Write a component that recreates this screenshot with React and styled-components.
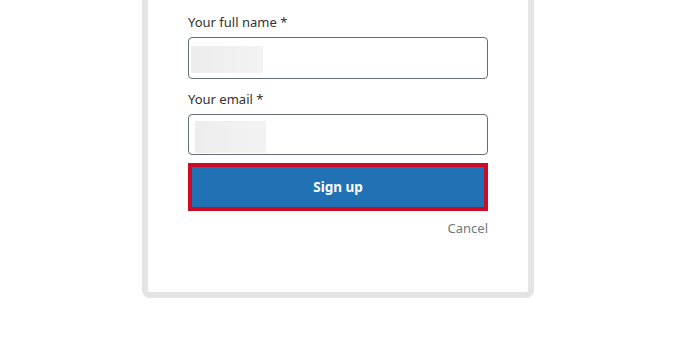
import React from "react";
import styled, { createGlobalStyle } from "styled-components";

const Global = createGlobalStyle`
  html, body { margin: 0; padding: 0; background: #ffffff; }
  body { font-family: "Noto Sans", "Open Sans", sans-serif; color: #323130; }
`;

const Page = styled.div`
  width: 680px;
  height: 345px;
  overflow: hidden;
  box-sizing: border-box;
  padding-left: 142px;
  display: flex;
  justify-content: flex-start;
`;

const Card = styled.div`
  box-sizing: border-box;
  width: 392px;
  margin-top: -40px;
  height: 338px;
  border: 6px solid #e4e4e4;
  border-radius: 8px;
  background: #fff;
  padding: 46px 40px 0;
  display: flex;
  flex-direction: column;
`;

const Label = styled.label`
  display: block;
  font-size: 13px;
  line-height: 20px;
  color: #323130;
  margin-top: ${(p) => p.$top || 0}px;
`;

const InputBox = styled.div`
  box-sizing: border-box;
  margin-top: 5px;
  height: ${(p) => p.$h}px;
  border: 1px solid #666e78;
  border-radius: 4px;
  background: #fff;
  padding: ${(p) => p.$pad};
  display: flex;
  align-items: flex-start;
`;

const Redacted = styled.div`
  width: ${(p) => p.$w}px;
  height: ${(p) => p.$h}px;
  background: linear-gradient(90deg, #ededed, #f3f3f3);
  border-radius: 1px;
`;

const Button = styled.button`
  box-sizing: border-box;
  margin-top: 8px;
  height: 48px;
  width: 100%;
  border: 4px solid #cc0b26;
  background: #2172b4;
  color: #fff;
  font-family: "Noto Sans", "Open Sans", sans-serif;
  font-weight: 700;
  font-size: 13.5px;
  cursor: pointer;
`;

const CancelRow = styled.div`
  display: flex;
  justify-content: flex-end;
  margin-top: 7px;
`;

const Cancel = styled.a`
  font-size: 13px;
  line-height: 20px;
  color: #6f7780;
  text-decoration: none;
`;

export default function App() {
  return (
    <>
      <Global />
      <Page>
        <Card>
          <Label>Your full name *</Label>
          <InputBox $h={42} $pad="8px 0 0 2px">
            <Redacted $w={72} $h={27} />
          </InputBox>
          <Label $top={10}>Your email *</Label>
          <InputBox $h={41} $pad="6px 0 0 6px">
            <Redacted $w={71} $h={32} />
          </InputBox>
          <Button>Sign up</Button>
          <CancelRow>
            <Cancel href="#">Cancel</Cancel>
          </CancelRow>
        </Card>
      </Page>
    </>
  );
}
